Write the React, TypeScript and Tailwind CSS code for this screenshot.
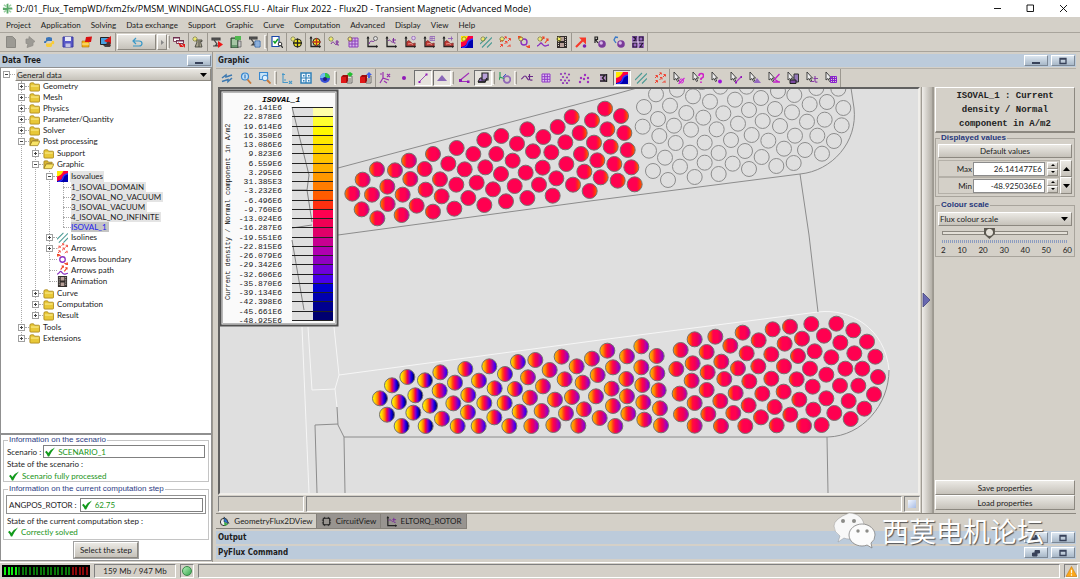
import React, { useState } from 'react';

type Point = [number, number];

interface TreeNode {
  label: string;
  icon?: string;
  open?: boolean;
  marked?: boolean;
  selected?: boolean;
  leaves?: boolean;
  children?: TreeNode[];
}

const MENUS = [
  'Project', 'Application', 'Solving', 'Data exchange', 'Support', 'Graphic',
  'Curve', 'Computation', 'Advanced', 'Display', 'View', 'Help',
];

const TREE: TreeNode[] = [
  { label: 'Geometry', icon: 'folder', open: false },
  { label: 'Mesh', icon: 'folder', open: false },
  { label: 'Physics', icon: 'folder', open: false },
  { label: 'Parameter/Quantity', icon: 'folder', open: false },
  { label: 'Solver', icon: 'folder', open: false },
  {
    label: 'Post processing',
    icon: 'folderOpen',
    open: true,
    children: [
      { label: 'Support', icon: 'folder', open: false },
      {
        label: 'Graphic',
        icon: 'folderOpen',
        open: true,
        children: [
          {
            label: 'Isovalues',
            icon: 'iso',
            open: true,
            marked: true,
            leaves: true,
            children: [
              { label: '1_ISOVAL_DOMAIN', marked: true },
              { label: '2_ISOVAL_NO_VACUUM', marked: true },
              { label: '3_ISOVAL_VACUUM', marked: true },
              { label: '4_ISOVAL_NO_INFINITE', marked: true },
              { label: 'ISOVAL_1', selected: true },
            ],
          },
          { label: 'Isolines', icon: 'lines', open: false },
          { label: 'Arrows', icon: 'arrows', open: false },
          { label: 'Arrows boundary', icon: 'boundary' },
          { label: 'Arrows path', icon: 'path' },
          { label: 'Animation', icon: 'film' },
        ],
      },
      { label: 'Curve', icon: 'folder', open: false },
      { label: 'Computation', icon: 'folder', open: false },
      { label: 'Result', icon: 'folder', open: false },
    ],
  },
  { label: 'Tools', icon: 'folder', open: false },
  { label: 'Extensions', icon: 'folder', open: false },
];

const LEGEND_VALUES = [
  '26.141E6', '22.878E6', '19.614E6', '16.350E6', '13.086E6', '9.823E6', '6.559E6', '3.295E6',
  '31.385E3', '-3.232E6', '-6.496E6', '-9.760E6', '-13.024E6', '-16.287E6', '-19.551E6', '-22.815E6',
  '-26.079E6', '-29.342E6', '-32.606E6', '-35.870E6', '-39.134E6', '-42.398E6', '-45.661E6', '-48.925E6',
];

const LEGEND_COLORS = [
  '#ffffa8', '#ffff30', '#fff800', '#ffe800', '#ffd800', '#ffc400', '#ffb000', '#ff9800',
  '#ff7c00', '#ff5c00', '#ff3010', '#ff0050', '#f00054', '#e00068', '#c80090', '#b000b0',
  '#9000c0', '#7000d8', '#4800e8', '#0000d0', '#0000b0', '#000090', '#000070',
];

// Conductor centres, three units to the pixel
const UPPER: Point[] = [
  [126, 253], [83, 284], [52, 326], [80, 373], [127, 400], [111, 329], [157, 305], [158, 357],
  [180, 256], [222, 227], [226, 282], [203, 329], [200, 390], [245, 362], [269, 252], [294, 207],
  [272, 314], [315, 283], [320, 334], [294, 380], [340, 236], [365, 189], [389, 253], [364, 299],
  [358, 371], [400, 339], [415, 207], [448, 165], [499, 153], [484, 207], [451, 247], [425, 293],
  [474, 313], [448, 360], [513, 349], [498, 267], [533, 227], [546, 176], [577, 133], [594, 199],
  [572, 263], [539, 303], [577, 339], [625, 156], [649, 202], [623, 248], [612, 299], [653, 332],
  [668, 126], [691, 172], [694, 237], [664, 280], [710, 96], [734, 144], [738, 207], [748, 260],
  [714, 299], [764, 318], [771, 106], [777, 173], [787, 226], [810, 71], [858, 93], [817, 133],
  [868, 144], [827, 185], [878, 195], [838, 237], [889, 247], [797, 277], [848, 287], [899, 298],
];

const EMPTY: Point[] = [
  [162, 66], [158, 125], [198, 28], [240, 62], [204, 102], [252, 122], [208, 153], [177, 197],
  [257, 174], [225, 218], [189, 258], [234, 285], [270, 245], [261, 14], [309, 34], [289, 84],
  [340, 98], [303, 134], [300, 203], [344, 173], [344, 233], [314, 276], [360, 50], [400, 85],
  [380, 133], [386, 204], [386, 267], [391, 5], [435, 44], [444, 116], [423, 165], [428, 236],
  [470, 5], [513, 39], [477, 75], [518, 108], [485, 150], [465, 198], [477, 252], [515, 216],
  [535, 167], [564, 18], [555, 72], [570, 123], [613, 30], [606, 82], [651, 110], [615, 152],
  [582, 191], [559, 243], [611, 234], [645, 195], [659, 58], [711, 51], [704, 104], [682, 152],
  [732, 168], [696, 206], [679, 9], [745, 11], [760, 69], [755, 121], [335, -9],
];

const LOWER: Point[] = [
  [195, 265], [216, 314], [260, 348], [231, 226], [277, 201], [252, 276], [301, 256], [295, 308],
  [330, 211], [376, 187], [345, 287], [332, 348], [374, 242], [381, 326], [420, 218], [451, 177],
  [415, 280], [460, 255], [459, 307], [428, 348], [492, 212], [523, 169], [508, 279], [491, 348],
  [539, 235], [538, 322], [570, 192], [609, 156], [569, 279], [583, 348], [600, 237], [639, 202],
  [661, 150], [614, 305], [645, 263], [649, 348], [684, 229], [704, 180], [680, 303], [740, 140],
  [720, 269], [715, 345], [749, 208], [753, 310], [771, 261], [785, 169], [790, 347], [803, 218],
  [831, 146], [807, 298], [843, 259], [848, 195], [854, 324], [877, 122], [894, 172], [936, 139],
  [979, 109], [1025, 138], [890, 236], [934, 207], [979, 172], [1027, 190], [894, 288], [936, 259],
  [982, 225], [1031, 241], [901, 348], [940, 311], [985, 277], [1035, 295], [988, 329], [1038, 346],
  [1097, 120], [1139, 88], [1084, 177], [1133, 160], [1175, 126], [1201, 80], [1094, 251], [1130, 212],
  [1178, 187], [1219, 155], [1246, 107], [1283, 68], [1098, 313], [1139, 279], [1175, 240], [1228, 207],
  [1269, 175], [1295, 130], [1331, 91], [1373, 58], [1425, 50], [1489, 42], [1564, 41], [1139, 347],
  [1180, 312], [1216, 273], [1262, 249], [1303, 214], [1330, 169], [1369, 133], [1409, 101], [1461, 86],
  [1527, 77], [1576, 98], [1615, 61], [1218, 348], [1255, 309], [1301, 286], [1342, 251], [1369, 206],
  [1407, 169], [1449, 138], [1499, 124], [1656, 95], [1291, 348], [1338, 322], [1379, 291], [1406, 245],
  [1445, 208], [1485, 176], [1549, 142], [1618, 130], [1681, 140], [1385, 346], [1426, 314], [1453, 269],
  [1493, 230], [1534, 194], [1591, 176], [1642, 176], [1689, 201], [1467, 347], [1495, 299], [1534, 265],
  [1575, 227], [1630, 227], [1520, 345], [1558, 309], [1601, 273], [1677, 253], [1607, 327], [1648, 296],
];

const GRADIENTS: Record<string, string[]> = {
  coldest: ['#fff400', '#ffc400', '#ff7800', '#f00050', '#8000d0', '#1000e0', '#000070'],
  cold: ['#ffd400', '#ffa000', '#ff4010', '#ff0050', '#c00090', '#7000d8', '#3000e8'],
  cool: ['#ffa800', '#ff8800', '#ff3818', '#ff0050', '#e00068', '#b800a8', '#8800c8'],
  mid: ['#ff8400', '#ff5000', '#ff1038', '#ff0050', '#f00054', '#d80078', '#b000b0'],
  warm: ['#ff6800', '#ff3a10', '#ff0050', '#ff0050', '#ff0050', '#e80060', '#c80090'],
  faint: ['#ff4800', '#ff1038', '#ff0050', '#ff0050', '#ff0050', '#f80050', '#e80060'],
  edge: ['#ff0050', '#ff0050', '#ff0050', '#ff0050', '#ff0050', '#ff2020', '#ff5000'],
};

const lowerFill = (x: number) => {
  if (x < 350) return 'url(#coldest)';
  if (x < 620) return 'url(#cold)';
  if (x < 1060) return 'url(#cool)';
  if (x < 1160) return 'url(#mid)';
  if (x < 1290) return 'url(#warm)';
  if (x < 1480) return 'url(#faint)';
  return '#ff0050';
};

const upperFill = (x: number) => {
  if (x < 240) return 'url(#warm)';
  if (x < 340) return 'url(#faint)';
  if (x < 700) return '#ff0050';
  return 'url(#edge)';
};

// Parts shared by the toolbar drawings
const spark = (
  <g>
    <path d="M3 0v6M0 3h6M1 1l4 4M5 1L1 5" stroke="#8c8c30" strokeWidth=".8" />
    <circle cx="3" cy="3" r="1.2" fill="#f4f060" />
  </g>
);
const curve = <path d="M3 8c2-4 3-1 4 0s2 1 2-1M9 4v4q0 1.500 2 1M7.500 6H11" stroke="#7a2a9a" fill="none" />;
const axes = (
  <g>
    <path d="M2 1v9.500h9.500" stroke="#222" strokeWidth="1.300" fill="none" />
    <path d="M0.500 2.500L2 0l1.500 2.500M10 9l2 1.500-2 1.500" fill="#222" />
  </g>
);
const cursor = <path d="M1 0v8l2-1.500 1.500 3 1.200-.6-1.400-2.800H6.500z" fill="#eee" stroke="#333" strokeWidth=".9" />;
const isoBox = (
  <g>
    <path d="M0 0h12v12H0z" fill="#0000b0" />
    <path d="M0 0h12v3Q7 4 6 7T0 11z" fill="#ff0040" />
    <path d="M0 0h7Q5 5 0 6z" fill="#ffe800" />
    <path d="M12 3Q7 4 6.500 7.500T1 12" stroke="#3030ff" fill="none" strokeWidth="1.500" />
  </g>
);
const isoLines = (
  <g stroke="#4a9a94" strokeWidth="1.100">
    <path d="M0 8L7 1M2 11.500L12 1.500M7 11.500L12 6.500" />
  </g>
);
const arrowSet = (
  <g stroke="#f04030" strokeWidth="1" fill="none">
    <path d="M1 6l2-2M1.500 3.500H3.500V5.500M5 3l2-2M5.500 .8H7.300V2.500M1 11l2-2M1.500 8.500H3.500V10.500M5.500 8l2-2M6 5.500H8V7.500M9 5l2-2M9.500 2.500H11.500V4.500M8.500 11l2-2M11 8.500V11" />
  </g>
);
const grid = <path d="M2 2h9v9H2zM5 2v9M8 2v9M2 5h9M2 8h9" stroke="#8a3fb8" fill="#d8b8ee" />;
const film = (
  <g>
    <path d="M1 0h10v12H1z" fill="#322c2a" />
    <path d="M4 1h4v4H4zM4 7h4v4H4z" fill="#b8a098" />
    <path d="M2.500 1v10M9.500 1v10" stroke="#d8d0c8" strokeWidth="1" strokeDasharray="1 1" />
  </g>
);
const chart = (
  <g>
    {axes}
    <path d="M2.700 9.800V6q2-3 4 0t4.500 1v2.800z" fill="#c03a34" stroke="#701818" strokeWidth=".6" />
    <path d="M4 8l3-.5 2 1" stroke="#f4b0a8" strokeWidth=".8" fill="none" />
  </g>
);
const sphere = (
  <g>
    <circle cx="8" cy="8" r="3.800" fill="#7a3a9a" />
    <circle cx="7.200" cy="7" r="1.700" fill="#d8b8e8" />
  </g>
);
const boundary = (
  <g fill="none">
    <circle cx="6" cy="6" r="3" stroke="#8a2fc0" strokeWidth="1.400" />
    <path d="M4 2L1 1M1 3l-.5-2.500L3 0M8 10l3 1M9 12l2.500-.5L11 9" stroke="#f04020" strokeWidth="1.200" />
  </g>
);
const pathIcon = (
  <g fill="none">
    <path d="M0 10c2 0 3-3 4-3s2 3 4 3 2-1 4-1" stroke="#8a2fc0" strokeWidth="1.300" />
    <path d="M4 5l3-4M5 1h2v2M8 7l3-4M9 3h2v2" stroke="#f04020" strokeWidth="1.100" />
  </g>
);
const boxes = (
  <g>
    <path d="M6 4h5v7H6z" fill="#e4e0d8" stroke="#555" strokeWidth=".8" />
    <path d="M0 5l2-2h5v6l-1.500 2H0z" fill="#a00c0c" />
    <path d="M0 5h5v6H0z" fill="#e01818" />
    <path d="M7 7h3M7 9h3" stroke="#777" />
  </g>
);

const ICONS: Record<string, React.ReactNode> = {
  newDoc: <path d="M1.500.5h6l3 3v8h-9z" fill="#9c9a94" stroke="#8a8882" />,
  openDoc: <path d="M2 3h3V.5l6 5-2 1v3l-6 2 1-4H2z" fill="#9c9a94" stroke="#908e88" strokeWidth=".8" />,
  python: (
    <g>
      <path d="M3 5V2.500Q3 1 6 1t3 1.500V5H5Q3 5 3 7H1Q1 4 3 5z" fill="#3a74b8" />
      <path d="M9 7v2.500Q9 11 6 11T3 9.500V7.500h4Q9 7 9 5h2q1 4-2 3z" fill="#f8cc38" />
    </g>
  ),
  save: (
    <g>
      <path d="M1 1h10v10H1z" fill="#5858c8" stroke="#3838a0" />
      <path d="M3 1h6v4H3z" fill="#e8e8f4" />
      <path d="M3.500 7.500h5V11h-5z" fill="#c4c4e4" />
    </g>
  ),
  exportBox: (
    <g>
      <path d="M1 5h7v6H1z" fill="#f4b41c" stroke="#b07000" strokeWidth=".6" />
      <path d="M5 1l6-.5L10 6H4z" fill="#d81010" />
      <path d="M1 8h7" stroke="#fff0a0" />
    </g>
  ),
  solveBox: (
    <g>
      <path d="M0.500 1.500h9v7h-9z" fill="#48a0e0" stroke="#222" />
      <path d="M3 9l2 2h5l1-2z" fill="#444" />
      <path d="M4 5l7-5v8z" fill="#d81818" />
      <circle cx="8.500" cy="8" r="2.200" fill="#4a3030" />
    </g>
  ),
  windows: (
    <g>
      <path d="M.5 1.500h6v4h-6z" fill="#fff" stroke="#884860" />
      <path d="M3.500 4.500h7v3h-7z" fill="#f4f4ff" stroke="#803850" />
      <path d="M0 1h7v1.500H0zM3 4h8v1.500H3z" fill="#703050" />
      <path d="M5 6l6 5H7zM9 8h3v4z" fill="#e01818" />
    </g>
  ),
  sparkI: <g><path d="M4 4h6v1.500H8.500L10 11H3l2-5zM7 5v6" fill="#aaa690" stroke="#3a3a34" strokeWidth=".8" />{spark}</g>,
  iRed: (
    <g>
      <path d="M1 2h8v1.800H1zM3 4l3 4-2 2h3M2 10h5" fill="#555" stroke="#444" strokeWidth="1.200" />
      <path d="M7 5l5 3.500L7 12z" fill="#f01818" />
    </g>
  ),
  server: (
    <g>
      <path d="M1 2h7v10H1z" fill="#6a9a70" stroke="#2c4430" />
      <path d="M2 4h5M2 6h5M2 8h5" stroke="#e0f0d8" />
      <path d="M5 0h6v4H5z" fill="#50b850" />
      <path d="M8 5h3v6H8z" fill="#c8c8c8" stroke="#555" strokeWidth=".7" />
    </g>
  ),
  iBlue: (
    <g>
      <path d="M0 1h8v1.800H0zM2 3l3 4-2 2h3" fill="#555" stroke="#444" strokeWidth="1.200" />
      <path d="M6 5h5v6H6z" fill="#bcd8f8" stroke="#3868a8" />
      <path d="M7 7h3M7 9h3" stroke="#3868a8" strokeWidth=".7" />
    </g>
  ),
  checkDoc: (
    <g>
      <path d="M1 .5h7v10H1z" fill="#fff" stroke="#1848a8" strokeWidth="1.200" />
      <path d="M2.500 5l1.500 2 3-4" stroke="#10a020" strokeWidth="1.500" fill="none" />
      <circle cx="9" cy="8" r="1.800" fill="#fff" stroke="#333" />
      <path d="M10 9.500l2 2.500" stroke="#333" strokeWidth="1.300" />
    </g>
  ),
  sparkTarget: (
    <g>
      <circle cx="7.500" cy="7" r="4" fill="#f4e820" stroke="#222" />
      <path d="M7.500 2.500v9M3 7h9" stroke="#222" strokeWidth="1.300" />{spark}
    </g>
  ),
  axesTarget: (
    <g>
      {axes}
      <circle cx="7.500" cy="6" r="3.600" fill="#f4e820" stroke="#222" />
      <path d="M7.500 2v8M3.500 6h8" stroke="#c03020" strokeWidth="1.300" />
    </g>
  ),
  sparkCurve: <g>{curve}{spark}</g>,
  sparkGrid: <g>{grid}{spark}</g>,
  axesClock: <g>{axes}<path d="M3 8c2-6 4 0 6-4" stroke="#7a2a9a" fill="none" /><circle cx="9.500" cy="2.500" r="2" fill="#ddd" stroke="#555" strokeWidth=".8" /></g>,
  axesCurve: <g>{axes}<path d="M3 5c2-3 3 2 5 1M8.500 2v4q0 1.500 2 1M7 4h4" stroke="#7a2a9a" fill="none" /></g>,
  chartClock: <g>{chart}<circle cx="9.500" cy="2" r="1.800" fill="#e0d0f0" stroke="#9060b8" strokeWidth=".8" /></g>,
  chartGrid: <g>{chart}<path d="M7 .5h5v4H7zM9 .5v4M7 2.500h5" stroke="#9060b8" fill="none" strokeWidth=".8" /></g>,
  chartCurve: <g>{chart}<path d="M6 2.500h5M9.500 .5v4" stroke="#9060b8" fill="none" strokeWidth=".9" /></g>,
  sparkIso: <g>{isoBox}{spark}</g>,
  sparkLines: <g>{isoLines}{spark}</g>,
  sparkArrows: <g>{arrowSet}{spark}</g>,
  sparkBoundary: <g>{boundary}{spark}</g>,
  sparkPath: <g>{pathIcon}{spark}</g>,
  sparkFilm: <g>{film}{spark}</g>,
  redArrow: <g><path d="M1 11l7-7" stroke="#f83828" strokeWidth="2.200" /><path d="M4 1.500h7v7z" fill="#f83828" /><circle cx="9.500" cy="10" r="1.800" fill="#7a20b0" /></g>,
  sphereR: <g>{sphere}<path d="M1 7V1h2.500v2.500H1.500L4 7" stroke="#222" fill="none" strokeWidth="1.200" /></g>,
  sphereC: <g>{sphere}<path d="M5 1.500L2.500 1 1 4l2 3" stroke="#3878c8" fill="none" strokeWidth="1.300" /></g>,
  sigma: (
    <g>
      <path d="M0 0h12v12H0z" fill="#9a68c0" />
      <path d="M5 1H1.500L4 3 1.500 5H5M7 1h4v4H7zM1 7h4v4H1zM7 7h4L8 11h3" stroke="#1c1028" fill="none" strokeWidth="1.100" />
      <path d="M6 0v12M0 6h12" stroke="#e8d8f4" strokeWidth=".8" />
    </g>
  ),
  refresh: <path d="M1 6l4-3v2l6-2M11 6l-4 3.500V7.500L1 9.500" stroke="#3c78b0" strokeWidth="1.500" fill="none" />,
  zoomOne: <g><circle cx="5" cy="4.500" r="3.500" fill="#c0e0f8" stroke="#3888d0" strokeWidth="1.200" /><path d="M5 2.500v4" stroke="#2060a8" /><path d="M7.500 7.500l3.500 4" stroke="#c87838" strokeWidth="1.800" /></g>,
  zoomBox: <g><path d="M.5.5h8v7h-8z" fill="#c8e4f8" stroke="#3888d0" strokeWidth="1.200" /><circle cx="6" cy="6" r="2.800" fill="#e0f0fc" stroke="#3888d0" /><path d="M8 8l3.500 3.500" stroke="#c87838" strokeWidth="1.800" /></g>,
  axesBlue: <path d="M2 1v9.500h5M1 2.500h3M8 9l3 3M11 9l-3 3M3 8h2" stroke="#4898c8" fill="none" strokeWidth="1.100" />,
  panes: <g><path d="M1 1h10v10H1z" fill="#f0f8ff" stroke="#3080b8" strokeWidth="1.500" /><path d="M6 1v10M1 6h10" stroke="#3080b8" strokeWidth="1.200" /><path d="M3 3h1.500v1.500H3zM8 3h1.500v1.500H8zM3 8h1.500v1.500H3zM8 8h1.500v1.500H8z" fill="#3080b8" /></g>,
  globe: <g><circle cx="6" cy="6" r="5" fill="#3850d8" /><path d="M6 6V1a5 5 0 0 1 5 5z" fill="#30c848" /><path d="M6 6H1a5 5 0 0 1 5-5z" fill="#70b8f0" /><circle cx="6" cy="7" r="2" fill="#20207a" /></g>,
  boxGreen: <g>{boxes}<path d="M6 2l3-2 3 2-3 3z" fill="#20c030" /></g>,
  boxBlue: <g>{boxes}<path d="M9 0l3 3h-2v3H8V3H6z" fill="#4060e8" /></g>,
  axes3d: <path d="M4 0v6l6 2M4 6L1 11M1 2h2M8 2l3 3M11 2L8 5M5 9l3 2" stroke="#9a30b0" fill="none" strokeWidth="1.200" />,
  dot: <circle cx="6" cy="6" r="2" fill="#9018b8" />,
  segment: <g><path d="M2.500 9.500l7-7" stroke="#9a50b8" /><path d="M1.500 9h2v2h-2zM8.500 1.500h2v2h-2z" fill="#9018b8" /></g>,
  triangle: <path d="M6 3l5 6H1z" fill="#8a68b8" />,
  nodes: <g><path d="M11 1L3 7.500M3 9.500h8" stroke="#a030b8" strokeWidth="1.200" /><path d="M1 7h3v3H1zM9 8.500h2.500V11H9z" fill="#9018b8" /></g>,
  volume: <g><path d="M1 10l2-4h7l-2 4z" fill="#9068c0" stroke="#222" /><path d="M5 1h6v7H5z" fill="#b8a0d8" stroke="#222" strokeWidth="1.200" /><path d="M1 10h7l2-4" stroke="#222" fill="none" strokeWidth="1.400" /></g>,
  coil: <g><circle cx="8" cy="7.500" r="3.300" stroke="#9068b8" strokeWidth="1.800" fill="none" /><path d="M1 0v5l4 1.500M1 5l-1 3" stroke="#30a060" fill="none" strokeWidth="1.200" /><path d="M4 5l3-3" stroke="#3858c8" /></g>,
  curve: <path d="M0 7c2 0 2-3 4-3s2 4 4 4M8.500 2v5q0 1.500 3 1M7 4.500h5" stroke="#6a2888" fill="none" strokeWidth="1.200" />,
  grid: <path d="M2 2h8v8H2zM4.700 2v8M7.300 2v8M2 4.700h8M2 7.300h8" stroke="#9038c8" fill="#e0c8f0" />,
  dots: <g fill="#9038b8"><circle cx="2" cy="2" r="1.100" /><circle cx="6" cy="1.500" r="1.100" /><circle cx="10" cy="2.500" r="1.100" /><circle cx="4" cy="5" r="1.100" /><circle cx="8" cy="5.500" r="1.100" /><circle cx="2" cy="8" r="1.100" /><circle cx="6" cy="8.500" r="1.100" /><circle cx="10" cy="8.500" r="1.100" /><circle cx="4" cy="11" r="1.100" /><circle cx="8" cy="11" r="1.100" /></g>,
  fewDots: <g fill="#a030c0"><circle cx="3" cy="6" r="1.200" /><circle cx="7" cy="3" r="1.200" /><circle cx="6" cy="7" r="1.200" /><circle cx="10" cy="6" r="1.200" /><circle cx="2" cy="10" r="1.200" /><circle cx="10" cy="10" r="1.200" /></g>,
  sensor: <g><path d="M3 2h7v8H3z" fill="#b890c8" /><path d="M3 3h5L5.500 6 8 9H3M9.500 2v8" stroke="#222" fill="none" strokeWidth="1.400" /></g>,
  iso: isoBox,
  lines: isoLines,
  arrows: arrowSet,
  boundary,
  path: pathIcon,
  film,
  pickNone: <g>{cursor}<circle cx="8.500" cy="9" r="2" fill="none" stroke="#d020d8" /><path d="M5.500 12l6-6" stroke="#d020d8" strokeWidth="1.100" /></g>,
  pickAsk: <g>{cursor}<path d="M7 4q0-2.500 2.300-2.500T11.500 4Q11.500 5.500 9 6.500V8M9 9.500V11" stroke="#d020c8" fill="none" strokeWidth="1.600" /></g>,
  pickDot: <g>{cursor}<circle cx="9" cy="9.500" r="1.900" fill="#a010e0" /></g>,
  pickSegment: <g>{cursor}<path d="M6 10l5-5" stroke="#b040c8" strokeWidth="1.200" /><path d="M5 9.500h2v2H5zM10.500 4h1.500v2h-1.500z" fill="#9018b8" /></g>,
  pickFace: <g>{cursor}<path d="M8 6l4 5H4.500z" fill="#9468c0" /></g>,
  pickNodes: <g>{cursor}<path d="M11.500 2L6 8M5 10h7M6 7l5 3" stroke="#c020c8" strokeWidth="1.300" /></g>,
  pickVolume: <g>{cursor}<path d="M7 2h4.500v8H7z" fill="#9478b8" stroke="#333" /><path d="M3 8h6v3.500H3z" fill="#7a48a0" stroke="#222" /></g>,
  pickCurve: <g>{cursor}<path d="M5 9.500h3M9 4v5q0 1.500 2.500 1M7.500 6.500H12" stroke="#8a40a8" fill="none" strokeWidth="1.200" /></g>,
  pickGrid: <g>{cursor}<path d="M5.500 4.500h6v6h-6zM7.500 4.500v6M9.500 4.500v6M5.500 6.500h6M5.500 8.500h6" stroke="#8a20d0" fill="none" /></g>,
  folder: (
    <g>
      <path d="M1 3.500Q1 2 2.500 2H5l1 1.500h4.500q1 0 1 1V10q0 1-1 1h-8.500Q1 11 1 10z" fill="#e8c838" stroke="#a88418" strokeWidth=".9" />
      <path d="M2 5.500h8.500" stroke="#fff4a0" />
    </g>
  ),
  folderOpen: (
    <g>
      <path d="M1 3q0-1 1-1h3l1 1.500h4V5H4l-3 5z" fill="#d8b430" stroke="#98781c" strokeWidth=".8" />
      <path d="M3.500 5.500H12L9.500 10.500H1z" fill="#f8e468" stroke="#98781c" strokeWidth=".8" />
    </g>
  ),
  pieTab: <g><circle cx="5.500" cy="6.500" r="4" fill="#f0f0f0" stroke="#222" /><path d="M5.500 6.500V1L11 8z" fill="#2878d8" stroke="#222" strokeWidth=".6" /><path d="M5.500 6.500L10 9 6 11z" fill="#38b048" /></g>,
  circuitTab: <g><path d="M2.500 2.500h7v7h-7z" fill="none" stroke="#222" strokeWidth="1.100" /><path d="M4 1v2M8 1v2M4 9v2M8 9v2M1 4.500h2M1 7.500h2M9 4.500h2M9 7.500h2" stroke="#222" strokeWidth=".9" /></g>,
  check: <path d="M0 6L2 4.500l2 2.700Q7 2.500 12 .5 8 5 5 11.500H3.500Q2.500 8.500 0 6z" fill="#129a1c" />,
  warning: <g><path d="M6 .5l6 11H0z" fill="#fca818" stroke="#c87808" strokeWidth=".6" /><path d="M6 4v4M6 9v1.500" stroke="#fffbe8" strokeWidth="1.300" /></g>,
};

const MAIN_TOOLS = [
  ['windows'], ['sparkI'], ['iRed', 'server', 'iBlue', '|'], ['checkDoc'], ['sparkTarget'], ['axesTarget'],
  ['sparkCurve', 'sparkGrid', 'axesClock', 'axesCurve', 'chartClock', 'chartGrid', 'chartCurve'],
  ['sparkIso', 'sparkLines', 'sparkArrows', 'sparkBoundary', 'sparkPath', 'sparkFilm'],
  ['redArrow', 'sphereR', 'sphereC', 'sigma'],
];

const VIEW_TOOLS = [
  ['refresh', 'zoomOne', 'zoomBox', '|', 'axesBlue', 'panes', 'globe', '|', 'boxGreen', 'boxBlue'],
  ['axes3d', 'dot', 'segment', 'triangle', '|', 'nodes', 'volume', '|', 'coil', '|', 'curve', 'grid', 'dots', 'fewDots', 'sensor', 'iso', 'lines', 'arrows'],
  ['pickNone', 'pickAsk', 'pickDot', 'pickSegment', 'pickFace', 'pickNodes', 'pickVolume', 'pickCurve', 'pickGrid'],
];

const PRESSED = ['segment', 'triangle', 'volume', 'iso'];

const RAISED = 'border border-t-white border-l-white border-r-[#8c8880] border-b-[#8c8880] bg-linear-to-b from-[#ebe9e4] to-[#c6c2ba]';
const SUNKEN = 'border border-t-[#808080] border-l-[#808080] border-r-white border-b-white';

function Icon({ name, size = 12 }: { name: string; size?: number }) {
  return (
    <svg width={size} height={size} viewBox="0 0 12 12" fill="none" aria-hidden="true" className="shrink-0">
      {ICONS[name]}
    </svg>
  );
}

function Grip() {
  return <span className="-ml-px h-[14px] w-[3px] border border-[#f4f2ee] border-r-[#9c9890]" />;
}

function ToolGroup({ tools, pressed = [] }: { tools: string[]; pressed?: string[] }) {
  return (
    <div className="flex items-center gap-px border-r border-[#9c9890]">
      {tools.map((t, i) =>
        t === '|' ? (
          <Grip key={i} />
        ) : (
          <button
            key={i}
            aria-label={t}
            className={`flex h-4 w-[18px] items-center justify-center ${
              pressed.includes(t) ? 'border border-t-[#707070] border-l-[#707070] border-r-white border-b-white bg-[#e6e3dd]' : ''
            }`}
          >
            <Icon name={t} />
          </button>
        )
      )}
    </div>
  );
}

function PaneHeader({ title, buttons }: { title: string; buttons: string[] }) {
  return (
    <div className="flex h-[13px] shrink-0 items-center gap-[3px] bg-[#bccbdb] pr-px pl-0.5">
      <h2 className="flex-1 font-['DejaVu_Sans_Condensed','DejaVu_Sans',sans-serif] text-[8px] leading-[12px] font-bold">{title}</h2>
      {buttons.map(b => (
        <button key={b} aria-label={b} className="flex h-[11px] w-6 items-center justify-center border border-t-white border-l-white border-r-[#7c8896] border-b-[#7c8896] bg-linear-to-b from-[#dce6f0] to-[#a8b8c8]">
          <svg width="8" height="8" viewBox="0 0 8 8" fill="none" stroke="#38425a" aria-hidden="true">
            {b === 'minimize' && <path d="M0 6h8" strokeWidth="2" />}
            {b === 'maximize' && <path d="M1 1.500h6v5H1zM1 2h6" strokeWidth="1.300" />}
            {b === 'restore' && <path d="M3 1.500h4.500V4H3zM.5 4H5v3H.5z" fill="#38425a" />}
          </svg>
        </button>
      ))}
    </div>
  );
}

function TreeRows({ nodes, leaves }: { nodes: TreeNode[]; leaves?: boolean }) {
  return (
    <ul className="relative before:absolute before:top-0 before:bottom-[5px] before:left-[3px] before:border-l before:border-dotted before:border-[#a8a8a8]">
      {nodes.map(n => (
        <li key={n.label}>
          <div className={`relative flex items-center ${leaves ? 'h-[10px] pl-[3px]' : 'h-[11px]'}`}>
            {n.open === undefined ? (
              <span className={leaves ? 'w-2 border-t border-dotted border-[#a8a8a8]' : 'ml-[3px] w-2 border-t border-dotted border-[#a8a8a8]'} />
            ) : (
              <>
                <button aria-label={`Toggle ${n.label}`} className="relative flex size-[7px] items-center justify-center border border-[#a0a0a0] bg-white">
                  <span className="h-px w-[3px] bg-[#444]" />
                  {!n.open && <span className="absolute h-[3px] w-px bg-[#444]" />}
                </button>
                <span className="w-1 border-t border-dotted border-[#a8a8a8]" />
              </>
            )}
            {n.icon && <Icon name={n.icon} size={11} />}
            <span
              className={`whitespace-nowrap ${leaves ? 'pr-0.5 leading-[10px]' : 'ml-[2px] px-px leading-[11px]'} ${
                n.selected ? 'bg-[#c4c4c4] text-[#2020f0]' : n.marked ? 'bg-[#e4e4e4]' : ''
              }`}
            >
              {n.label}
            </span>
          </div>
          {n.children && (
            <div className={n.leaves ? 'ml-[14px]' : 'my-px ml-[14px]'}>
              <TreeRows nodes={n.children} leaves={n.leaves} />
            </div>
          )}
        </li>
      ))}
    </ul>
  );
}

function Legend() {
  const step = 213 / 23;
  return (
    <g fontFamily="'Liberation Mono', monospace">
      <path d="M220.500 90.500h117v235h-117z" fill="#fafafa" stroke="#505050" strokeWidth="2" />
      <path d="M222.500 92.500h113v231h-113z" fill="none" stroke="#b8b8b8" />
      <rect x="292" y="107" width="21" height="213" fill="#dfdfdf" />
      {LEGEND_COLORS.map((c, i) => (
        <rect key={c} x="313" y={107 + i * step} width="20" height={step + 0.5} fill={c} />
      ))}
      <path d="M292 107l17 68-2 15 5 32M292 190l15 0M292 228l20-3M292 240l12 70" stroke="#808080" fill="none" />
      <text x="262" y="102" fontSize="8" fontWeight="bold" fontStyle="italic">ISOVAL_1</text>
      {LEGEND_VALUES.map((v, i) => (
        <g key={v}>
          <text x="282" y={110 + i * step} fontSize="8" textAnchor="end" fill="#222">{v}</text>
          <path d={`M292 ${Math.round(107 + i * step) + 0.5}h41`} stroke="#222" />
        </g>
      ))}
      <text transform="translate(230 300) rotate(-90)" fontSize="7" fill="#111">Current density / Normal component in A/m2</text>
    </g>
  );
}

function FieldView() {
  return (
    <svg className="block h-full w-full bg-[#dfdfdf]" role="img" aria-label="ISOVAL_1">
      <defs>
        {Object.entries(GRADIENTS).map(([id, stops]) => (
          <linearGradient key={id} id={id}>
            {stops.map((c, i) => (
              <stop key={i} offset={(i + 0.5) / stops.length} stopColor={c} />
            ))}
          </linearGradient>
        ))}
      </defs>
      <g transform="translate(-220 -89)">
        <g fill="none" stroke="#f6f6f6">
          <path d="M334 327l5 48-4 14 2 18M339 375L600 340 818 312C850 308 885 328 889 370" />
          <path d="M308 327l4 63 23-1M302 327l7 166" />
        </g>
        <g fill="none" stroke="#8c8c8c">
          <path d="M338 168L605 97 637 88" />
          <path d="M338 235L590 201 800 174C832 171 858 142 854 108L851 88" />
          <path d="M800 174l9 61 9 77" />
          <path d="M889 370c0 35-27 66-61 67H344l-6-12-1-18M344 437l1 56M338 424l-23 1 2 68M827 437l1 56" />
        </g>
        <g stroke="#74706e" strokeWidth="3">
          <g transform="translate(335 85) scale(.33333)">
            {UPPER.map(([x, y]) => <circle key={`${x}-${y}`} cx={x} cy={y} r="22.500" fill={upperFill(x)} />)}
          </g>
          <g transform="translate(590 85) scale(.33333)" fill="none" stroke="#8c8c8c">
            {EMPTY.map(([x, y]) => <circle key={`${x}-${y}`} cx={x} cy={y} r="22.500" />)}
          </g>
          <g transform="translate(315 310) scale(.33333)">
            {LOWER.map(([x, y]) => <circle key={`${x}-${y}`} cx={x} cy={y} r="22.500" fill={lowerFill(x)} />)}
          </g>
        </g>
        <Legend />
      </g>
    </svg>
  );
}

function Arrow({ up, small }: { up?: boolean; small?: boolean }) {
  return (
    <svg width={small ? 4 : 7} height={small ? 2 : 4} viewBox="0 0 6 4" preserveAspectRatio="none" aria-hidden="true" className="pointer-events-none">
      <path d={up ? 'M0 4l3-4 3 4z' : 'M0 0l3 4 3-4z'} fill="#000" />
    </svg>
  );
}

function ValueField({ id, label, value, onChange }: { id: string; label: string; value: string; onChange: (v: string) => void }) {
  return (
    <div className="flex h-[17px] items-center gap-px border border-[#b4b0a8] pr-px">
      <label htmlFor={id} className="flex-1 text-right">{label}</label>
      <input
        id={id}
        value={value}
        onChange={e => onChange(e.target.value)}
        className="h-[14px] w-[72px] border border-[#8c8c8c] bg-white pr-0.5 text-right"
      />
      <div className="ml-px flex w-[11px] flex-col">
        <button aria-label={`${label} up`} className={`flex h-[7px] items-center justify-center ${RAISED}`}><Arrow up small /></button>
        <button aria-label={`${label} down`} className={`flex h-[7px] items-center justify-center ${RAISED}`}><Arrow small /></button>
      </div>
    </div>
  );
}

function Properties() {
  const [max, setMax] = useState('26.141477E6');
  const [min, setMin] = useState('-48.925036E6');
  const [count, setCount] = useState(23);

  return (
    <aside className="flex w-[143px] shrink-0 flex-col border-l border-[#9c9890] px-px pb-[3px]">
      <h3 className="border border-t-white border-l-white border-r-[#8c8880] border-b-2 border-b-[#8c8880] px-2 pt-px text-center font-['Liberation_Mono',monospace] text-[9px] leading-[14px] font-bold text-[#222]">
        ISOVAL_1 : Current density / Normal component in A/m2
      </h3>
      <fieldset className="border border-[#a8a49c] px-0.5 pb-0.5">
        <legend className="ml-0.5 px-px font-['Liberation_Sans',sans-serif] text-[8px] leading-[10px] font-bold text-[#26387c]">Displayed values</legend>
        <button className={`mt-px block h-[14px] w-full ${RAISED}`}>Default values</button>
        <div className="mt-[2px] flex">
          <div className="flex-1">
            <ValueField id="max" label="Max" value={max} onChange={setMax} />
            <ValueField id="min" label="Min" value={min} onChange={setMin} />
          </div>
          <div className="flex w-[12px] flex-col">
            <button aria-label="Increase" className={`flex flex-1 items-center justify-center ${RAISED}`}><Arrow up /></button>
            <button aria-label="Decrease" className={`flex flex-1 items-center justify-center ${RAISED}`}><Arrow /></button>
          </div>
        </div>
      </fieldset>
      <fieldset className="mt-[3px] border border-[#a8a49c] px-0.5 pb-px">
        <legend className="ml-0.5 px-px font-['Liberation_Sans',sans-serif] text-[8px] leading-[10px] font-bold text-[#26387c]">Colour scale</legend>
        <div className="relative mt-0.5">
          <select aria-label="Colour scale" className={`block h-[14px] w-full appearance-none pl-px ${RAISED}`}>
            <option>Flux colour scale</option>
          </select>
          <span className="pointer-events-none absolute inset-y-0 right-1 flex items-center"><Arrow /></span>
        </div>
        <div className="relative mt-px">
          <input
            type="range"
            aria-label="Number of colours"
            min={2}
            max={60}
            value={count}
            onChange={e => setCount(Number(e.target.value))}
            className="block h-3 w-full appearance-none bg-transparent [&::-webkit-slider-runnable-track]:mx-1 [&::-webkit-slider-runnable-track]:h-1 [&::-webkit-slider-runnable-track]:border [&::-webkit-slider-runnable-track]:border-[#8c8880] [&::-webkit-slider-runnable-track]:bg-[#e4e0d8] [&::-webkit-slider-thumb]:-mt-1 [&::-webkit-slider-thumb]:h-[11px] [&::-webkit-slider-thumb]:w-[11px] [&::-webkit-slider-thumb]:appearance-none [&::-webkit-slider-thumb]:bg-[radial-gradient(circle_at_50%_40%,#e4e0d8_0_3px,#5c5850_4px)] [&::-webkit-slider-thumb]:[clip-path:polygon(0_0,100%_0,100%_55%,50%_100%,0_55%)]"
          />
        </div>
        <div className="mx-1 mt-px h-[3px] bg-[repeating-linear-gradient(90deg,#8c9cc0_0_1px,transparent_1px_2px)]" />
        <div className="flex justify-between pt-0.5 pl-[3px]">
          {[2, 10, 20, 30, 40, 50, 60].map(n => <span key={n}>{n}</span>)}
        </div>
      </fieldset>
      <div className="flex-1" />
      <button className={`h-[15px] ${RAISED}`}>Save properties</button>
      <button className={`h-[15px] ${RAISED}`}>Load properties</button>
    </aside>
  );
}

function Solved({ children }: { children: React.ReactNode }) {
  return (
    <p className="flex h-[11px] items-center gap-[3px] pl-0.5 text-[#1a9420]">
      <Icon name="check" size={10} />
      {children}
    </p>
  );
}

function ScenarioPanel() {
  return (
    <section className="shrink-0 border border-[#909090] bg-white px-0.5 pb-0.5">
      <fieldset className="border border-[#c4c4c4] px-[3px]">
        <legend className="ml-px px-px font-['Liberation_Sans',sans-serif] text-[8px] leading-[10px] text-[#2c3c84]">Information on the scenario</legend>
        <div className="flex items-center gap-0.5">
          <label htmlFor="scenario">Scenario :</label>
          <div className="flex h-[13px] flex-1 items-center gap-[3px] border border-[#808080] pl-px">
            <Icon name="check" size={10} />
            <input id="scenario" readOnly value="SCENARIO_1" className="w-full min-w-0 text-[#1a9420] outline-none" />
          </div>
        </div>
        <p className="h-[12px] leading-[13px]">State of the scenario :</p>
        <Solved>Scenario fully processed</Solved>
      </fieldset>
      <fieldset className="mt-0.5 border border-[#c4c4c4] px-0.5 pb-0.5">
        <legend className="ml-0.5 px-px font-['Liberation_Sans',sans-serif] text-[8px] leading-[10px] text-[#2c3c84]">Information on the current computation step</legend>
        <div className="mt-px flex h-[19px] items-center gap-[3px] border border-[#909090] px-0.5">
          <label htmlFor="angpos">ANGPOS_ROTOR :</label>
          <div className="flex h-[14px] flex-1 items-center gap-[3px] border border-[#808080] pl-px">
            <Icon name="check" size={10} />
            <input id="angpos" readOnly value="62.75" className="w-full min-w-0 text-[#1a9420] outline-none" />
          </div>
        </div>
        <p className="h-[12px] pl-px leading-[14px]">State of the current computation step :</p>
        <Solved>Correctly solved</Solved>
      </fieldset>
      <button className={`mx-auto mt-0.5 block h-4 w-16 outline outline-[#a0a0a0] ${RAISED}`}>Select the step</button>
    </section>
  );
}

const METER = Array.from({ length: 24 }, (_, i) => (i < 4 ? 'bg-[#10f010]' : i < 19 ? 'bg-[#087808]' : 'bg-[#8c0808]'));

export default function App() {
  return (
    <div className="relative flex h-screen flex-col overflow-hidden bg-[#d4d0c8] font-[Lato,sans-serif] text-[8px] leading-[10px] text-[#1c1c1c]">
      {/* Title bar */}
      <header className="flex h-[17px] shrink-0 items-center bg-white pl-0.5">
        <svg width="11" height="11" viewBox="0 0 12 12" aria-hidden="true">
          <path d="M5 1l2-.5V5h4l.5 2H7v4.500H5V8L1 7.500V5l4 .5z" fill="#58a868" />
          <path d="M2 2l3 2M10 2L7 4M2 10l3-2M10 10L7 8" stroke="#9cd0a4" strokeWidth="1.500" />
        </svg>
        <h1 className="ml-[3px] flex-1 font-['Open_Sans',sans-serif] text-[9px] leading-[16px] whitespace-nowrap text-black">
          D:/01_Flux_TempWD/fxm2fx/PMSM_WINDINGACLOSS.FLU - Altair Flux 2022 - Flux2D - Transient Magnetic (Advanced Mode)
        </h1>
        <div className="flex text-black">
          {['M1 4.500h7', 'M1 1h6.500v6.500H1z', 'M1 1l7 7M8 1L1 8'].map((d, i) => (
            <button key={d} aria-label={['Minimize', 'Maximize', 'Close'][i]} className="flex h-4 w-[33px] items-center justify-center">
              <svg width="9" height="9" viewBox="0 0 9 9" fill="none" stroke="currentColor" strokeWidth=".9"><path d={d} /></svg>
            </button>
          ))}
        </div>
      </header>

      {/* Menu bar */}
      <nav className="flex h-[15px] shrink-0 items-center gap-[10px] pl-1.5">
        {MENUS.map(m => <button key={m}>{m}</button>)}
      </nav>

      {/* Main toolbar */}
      <div className="flex h-5 shrink-0 border-t border-b border-t-[#a8a49c] border-b-[#a8a49c] pl-px">
        <div className="flex items-center">
          {['newDoc', 'openDoc', 'python', 'save', 'exportBox', 'solveBox'].map(t => (
            <button key={t} aria-label={t} className="flex h-4 w-[19px] items-center justify-center"><Icon name={t} /></button>
          ))}
        </div>
        <div className="flex items-center gap-px border-l border-[#9c9890] pl-px">
          <button aria-label="Undo" className={`flex h-4 w-[39px] items-center justify-center ${RAISED}`}>
            <svg width="12" height="10" viewBox="0 0 12 10" fill="none" stroke="#3898c8" strokeWidth="1.200" aria-hidden="true">
              <path d="M3 4h5q3 0 3 2.500T8 9H2M5 1L2 4l3 3" />
            </svg>
          </button>
          <button aria-label="Undo list" className={`flex h-4 w-[10px] items-center justify-center ${RAISED}`}>
            <svg width="3" height="5" viewBox="0 0 3 5" aria-hidden="true"><path d="M0 0l3 2.500L0 5z" fill="#888" /></svg>
          </button>
          <Grip />
        </div>
        {MAIN_TOOLS.map((g, i) => <ToolGroup key={i} tools={g} />)}
      </div>

      <div className="flex min-h-0 flex-1">
        {/* Data tree */}
        <div className="flex w-[212px] shrink-0 flex-col pt-0.5 pb-px">
          <PaneHeader title="Data Tree" buttons={['minimize']} />
          <div className="min-h-0 flex-1 overflow-hidden border border-[#909090] bg-white pl-0.5">
            <div className="flex items-center">
              <button aria-label="Collapse all" className="flex size-[7px] items-center justify-center border border-[#a0a0a0] bg-white">
                <span className="h-px w-[3px] bg-[#444]" />
              </button>
              <span className="w-[5px] border-t border-dotted border-[#a8a8a8]" />
              <div className="relative flex-1">
                <select aria-label="Data" className={`block h-[13px] w-full appearance-none pl-px ${RAISED}`}>
                  <option>General data</option>
                </select>
                <span className="pointer-events-none absolute inset-y-0 right-1 flex items-center"><Arrow /></span>
              </div>
            </div>
            <div className="ml-[15px]">
              <TreeRows nodes={TREE} />
            </div>
          </div>
          <div className="flex flex-col">
            <ScenarioPanel />
          </div>
        </div>

        {/* Graphic */}
        <main className="flex min-w-0 flex-1 flex-col border-l border-[#9c9890] pt-0.5 pr-1 pb-[3px] pl-[3px]">
          <PaneHeader title="Graphic" buttons={['minimize', 'maximize']} />
          <div className="mt-px flex h-[19px] shrink-0 border-t border-[#b4b0a8] pl-0.5">
            {VIEW_TOOLS.map((g, i) => <ToolGroup key={i} tools={g} pressed={PRESSED} />)}
          </div>
          <div className="flex min-h-0 flex-1">
            <div className="flex min-w-0 flex-1 flex-col pr-px pl-0.5">
              <div className="min-h-0 flex-1 overflow-hidden border-2 border-t-[#606060] border-l-[#606060] border-r-[#f0eeea] border-b-[#f0eeea]">
                <FieldView />
              </div>
              <div className="flex h-[18px] shrink-0 gap-0.5 pt-px pb-px">
                <div className={`w-[86px] ${SUNKEN}`} />
                <div className={`flex-1 ${SUNKEN}`} />
                <button aria-label="Details" className={`flex w-4 items-center justify-center ${SUNKEN}`}>
                  <span className="size-2 bg-linear-to-br from-[#f4f8ff] to-[#a8bce4]" />
                </button>
              </div>
            </div>
            <div className="flex w-[12px] shrink-0 items-center border-x border-[#a09c94] bg-linear-to-r from-[#f0eeea] to-[#b4b0a8]">
              <button aria-label="Hide properties" className="block">
                <svg width="9" height="14" viewBox="0 0 9 14" aria-hidden="true"><path d="M1 0l7 7-7 7z" fill="#6868b0" stroke="#44447c" strokeWidth=".8" /></svg>
              </button>
            </div>
            <Properties />
          </div>
          <div className="flex h-[16px] shrink-0 items-start border-t border-[#8c8880]">
            {[
              ['GeometryFlux2DView', 'pieTab', 'w-[101px]'],
              ['CircuitView', 'circuitTab', 'w-[64px] bg-[#989490]'],
              ['ELTORQ_ROTOR', 'axesCurve', 'w-[86px] bg-[#989490]'],
            ].map(([label, icon, style]) => (
              <button key={label} className={`flex h-[15px] items-center justify-center gap-1 border-r border-b border-[#84807a] ${style}`}>
                <Icon name={icon} size={11} />
                {label}
              </button>
            ))}
          </div>
          <div className="mt-0.5 flex flex-col gap-0.5">
            <PaneHeader title="Output" buttons={['restore', 'maximize']} />
            <PaneHeader title="PyFlux Command" buttons={['restore', 'maximize']} />
          </div>
        </main>
      </div>

      {/* Status bar */}
      <footer className="flex h-[17px] shrink-0 items-center gap-1 border-t border-white px-0.5">
        <div className="flex h-3 w-[88px] items-center justify-between bg-black px-0.5">
          {METER.map((c, i) => <span key={i} className={`h-2 w-0.5 ${c}`} />)}
        </div>
        <div className={`h-[14px] w-[82px] text-center leading-[12px] ${SUNKEN}`}>159 Mb / 947 Mb</div>
        <button aria-label="Free memory" className={`flex size-[14px] items-center justify-center ${SUNKEN}`}>
          <span className="size-[10px] rounded-full border border-[#388848] bg-linear-to-br from-[#b0f0b8] to-[#30a850]" />
        </button>
        <div className={`h-[14px] flex-1 ${SUNKEN}`} />
        <div className={`flex size-[14px] items-center justify-center ${SUNKEN}`}><Icon name="warning" size={11} /></div>
      </footer>

      {/* Watermark */}
      <div className="pointer-events-none absolute right-9 bottom-[29px] flex items-center gap-1.5 text-white">
        <svg width="43" height="38" viewBox="0 0 43 38" aria-hidden="true">
          <path d="M16 1c9 0 15 6 15 13S25 27 16 27q-3 0-5-1l-6 4 2-6Q1 20 1 14 1 7 16 1z" fill="#f8f8f8" stroke="#88888866" />
          <path d="M29 12c7 0 13 5 13 11q0 5-4 8l1 5-5-3q-2 1-5 1c-7 0-13-5-13-11s6-11 13-11z" fill="#fcfcfc" stroke="#808080" strokeWidth=".8" />
          <g fill="#8c8c88">
            <circle cx="10" cy="9" r="2" /><circle cx="21" cy="9" r="2" /><circle cx="25" cy="19" r="1.700" /><circle cx="34" cy="19" r="1.700" />
          </g>
        </svg>
        <span className="font-['Noto_Sans_CJK_SC',sans-serif] text-[27px] leading-9 [text-shadow:1px_1px_1px_#555]">西莫电机论坛</span>
      </div>
    </div>
  );
}
